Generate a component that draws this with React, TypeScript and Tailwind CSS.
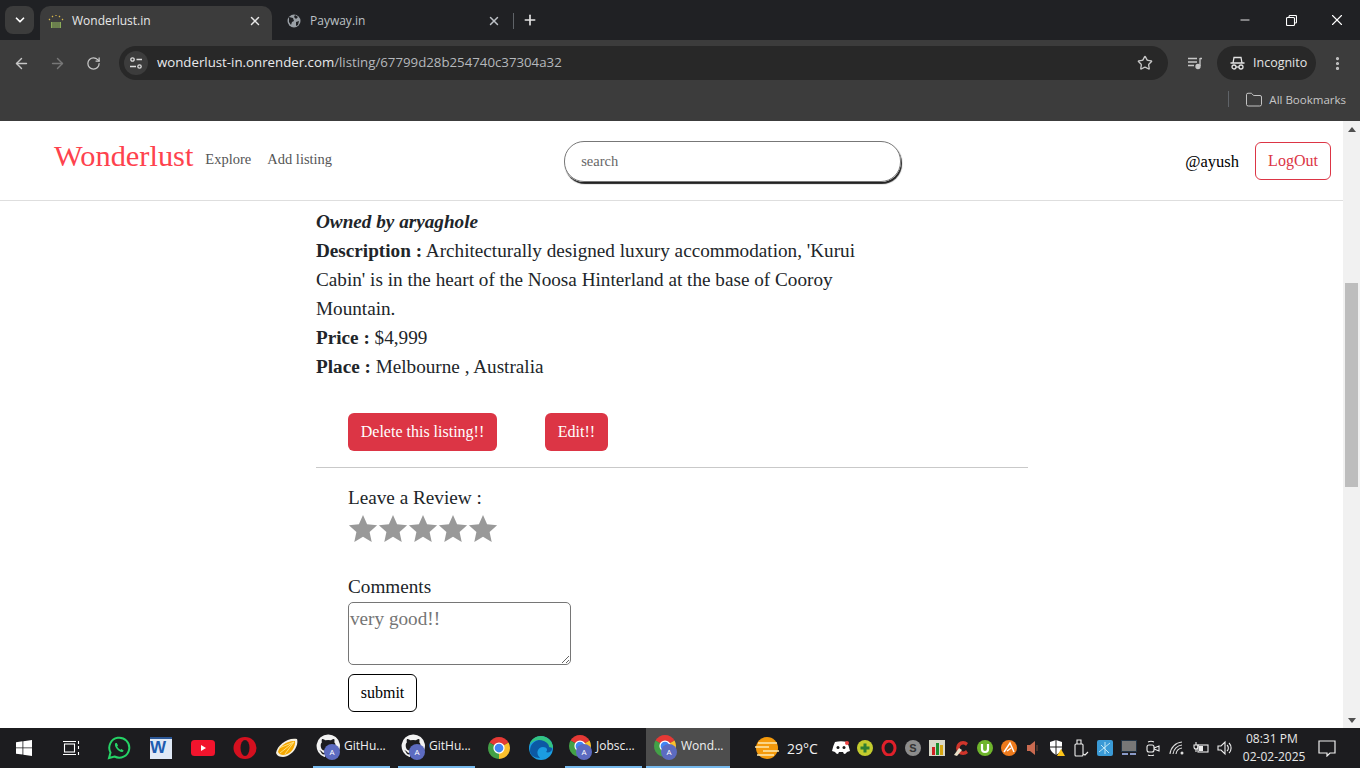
import React from 'react'
import { ArrowLeft, ArrowRight, ChevronDown, Folder, Minus, MoreVertical, Plus, RotateCw, Star, X } from 'lucide-react'

const uiFont = 'font-["Open_Sans","Noto_Sans",sans-serif]'

const ChromeIcon = ({ size = 24 }: { size?: number }) => (
  <svg width={size} height={size} viewBox="0 0 48 48">
    <path d="M24 24L4.950 13A22 22 0 0 1 43.050 13z" fill="#e53935" />
    <path d="M24 24L43.050 13A22 22 0 0 1 24 46z" fill="#fbc02d" />
    <path d="M24 24L24 46A22 22 0 0 1 4.950 13z" fill="#43a047" />
    <circle cx="24" cy="24" r="10" fill="#4285f4" stroke="#fff" strokeWidth="2.500" />
  </svg>
)

const GithubIcon = () => (
  <svg width="24" height="24" viewBox="0 0 24 24" fill="#f2f2f2">
    <path d="M12 .5a11.500 11.500 0 0 0-3.600 22.400c.6.1.8-.3.8-.6v-2c-3.200.7-3.900-1.500-3.900-1.500-.5-1.300-1.300-1.700-1.300-1.700-1-.7.1-.7.1-.7 1.200.1 1.800 1.200 1.800 1.200 1 1.800 2.700 1.300 3.400 1 .1-.8.4-1.300.7-1.600-2.600-.3-5.300-1.300-5.300-5.700 0-1.300.5-2.300 1.200-3.100-.1-.3-.5-1.500.1-3.100 0 0 1-.3 3.200 1.200a11 11 0 0 1 5.800 0c2.200-1.500 3.200-1.200 3.200-1.200.6 1.600.2 2.800.1 3.100.8.8 1.200 1.800 1.200 3.100 0 4.400-2.700 5.400-5.300 5.700.4.400.8 1.100.8 2.200v3.200c0 .3.200.7.800.6A11.500 11.500 0 0 0 12 .5z" />
  </svg>
)

const ProfileBadge = () => (
  <span className="absolute left-[8px] top-[10px] flex h-4 w-4 items-center justify-center rounded-full bg-[#5c6bc0] text-[8px] text-white">A</span>
)

type TaskButtonProps = {
  label: string
  icon: React.ReactNode
  width: string
  inset?: string
  active?: boolean
}

const TaskButton = ({ label, icon, width, inset = 'pl-[3px]', active }: TaskButtonProps) => (
  <div className={`flex h-10 items-center border-b-[2px] border-[#76b9ed] ${inset} ${width} ${active ? 'bg-[#4d4d4d]' : ''}`}>
    <div className="relative mb-[2px] h-6 w-6 shrink-0">
      {icon}
      <ProfileBadge />
    </div>
    <span className="mb-[2px] ml-[4px] text-[12px] text-[#f0f0f0]">{label}</span>
  </div>
)

const TabStrip = () => (
  <div className={`flex h-10 items-end bg-[#202124] pl-[5px] ${uiFont}`}>
    <div className="mb-[6px] flex h-[28px] w-[29px] items-center justify-center rounded-lg bg-[#3c3c3c]">
      <ChevronDown size={14} strokeWidth={3} className="text-white" />
    </div>
    <div className="ml-[6px] flex h-[34px] w-[232px] items-center rounded-t-[10px] bg-[#3c3c3c] pb-[5px] pl-[8px] pr-[10px]">
      <svg width="16" height="16" viewBox="0 0 16 16">
        <rect x="3" y="9" width="10" height="6" fill="#8bac5a" />
        <path d="M5 9v6M7 9v6M9 9v6M11 9v6" stroke="#3c3c3c" strokeWidth="0.800" />
        <path d="M1 6l1 1M4 3l1 1M8 2v1M12 3l-1 1M15 6l-1 1" stroke="#d8b74a" strokeWidth="1.200" />
      </svg>
      <span className="ml-[8px] flex-1 text-[12px] text-[#e8e8e8]">Wonderlust.in</span>
      <X size={14} strokeWidth={2.500} className="text-[#e8e8e8]" />
    </div>
    <div className="flex h-[34px] w-[239px] items-center pb-[5px] pl-[14px] pr-[10px]">
      <svg width="16" height="16" viewBox="0 0 16 16">
        <circle cx="8" cy="8" r="6.500" fill="#9aa0a6" />
        <path d="M3 4l4 1 1 3-2 1-1 3-2-3zM9 2l3 2-2 2-2-2zM10 9l3-1-1 4-2 1z" fill="#202124" />
      </svg>
      <span className="ml-[8px] flex-1 text-[12px] text-[#bdc1c6]">Payway.in</span>
      <X size={14} strokeWidth={2.500} className="text-[#bdc1c6]" />
    </div>
    <div className="mb-[11px] ml-[2px] h-[16px] w-px bg-[#5f6368]" />
    <Plus size={16} strokeWidth={2.500} className="mb-[12px] ml-[8px] text-[#e3e3e3]" />
    <div className="mb-[8px] ml-auto flex h-6 items-center text-white">
      <Minus size={14} strokeWidth={1.500} className="mr-[34px]" />
      <svg width="11" height="11" viewBox="0 0 11 11" fill="none" stroke="#fff" strokeWidth="1.100" className="mr-[31px]">
        <rect x="0.500" y="2.500" width="8" height="8" rx="1" />
        <path d="M3 2.500V1.500a1 1 0 0 1 1-1h5.500a1 1 0 0 1 1 1V7a1 1 0 0 1-1 1h-1" />
      </svg>
      <X size={18} strokeWidth={1.500} className="mr-[14px]" />
    </div>
  </div>
)

const Toolbar = () => (
  <div className={`flex h-[46px] items-center bg-[#3c3c3c] pl-[13px] ${uiFont}`}>
    <ArrowLeft size={17} strokeWidth={2} className="text-[#c7c7c7]" />
    <ArrowRight size={17} strokeWidth={2} className="ml-[19px] text-[#777]" />
    <RotateCw size={15} strokeWidth={2} className="ml-[20px] text-[#c7c7c7]" />
    <div className="ml-[18px] flex h-[34px] w-[1049px] items-center rounded-full bg-[#282828] pl-[5px] pr-[15px]">
      <div className="flex h-6 w-6 items-center justify-center rounded-full bg-[#3c3c3c]">
        <svg width="14" height="14" viewBox="0 0 14 14" fill="none" stroke="#dcdcdc" strokeWidth="1.300">
          <circle cx="3.500" cy="3.500" r="1.700" />
          <path d="M7.500 3.500H13M1 10.500h6" />
          <circle cx="10.500" cy="10.500" r="1.700" />
        </svg>
      </div>
      <span className="ml-[9px] flex-1 text-[13.250px] text-[#b5b8bc]">
        <span className="text-[#e8eaed]">wonderlust-in.onrender.com</span>/listing/67799d28b254740c37304a32
      </span>
      <Star size={16} strokeWidth={2} className="text-[#c7c7c7]" />
    </div>
    <svg width="16" height="14" viewBox="0 0 16 14" fill="none" stroke="#c7c7c7" strokeWidth="1.300" className="ml-[19px]">
      <path d="M1 2.500h9M1 6h9M1 9.500h6M13 2.500H15M13 2v8" />
      <circle cx="11" cy="10.500" r="2" fill="#c7c7c7" />
    </svg>
    <div className="ml-[14px] flex h-[34px] w-[99px] items-center rounded-full bg-[#282828] pl-[13px]">
      <svg width="15" height="14" viewBox="0 0 15 14" fill="none" stroke="#e3e3e3" strokeWidth="1.300">
        <path d="M0.500 7h14M3 7l1-5.500h7L12 7" />
        <circle cx="4" cy="11" r="2" />
        <circle cx="11" cy="11" r="2" />
        <path d="M6 11h3" />
      </svg>
      <span className="ml-[8px] text-[12.500px] text-[#e3e3e3]">Incognito</span>
    </div>
    <MoreVertical size={17} strokeWidth={2.500} className="ml-[13px] text-[#c7c7c7]" />
  </div>
)

const BookmarksBar = () => (
  <div className={`flex h-[35px] items-start justify-end bg-[#3c3c3c] pr-[14px] pt-[5px] ${uiFont}`}>
    <div className="mr-[16px] h-[16px] w-px bg-[#5f6368]" />
    <Folder size={18} strokeWidth={1.300} className="text-[#c7c7c7]" />
    <span className="ml-[6px] text-[11.500px] leading-[18px] text-[#c7c7c7]">All Bookmarks</span>
  </div>
)

const SiteHeader = () => (
  <div className="flex h-[80px] items-center border-b border-[#dedede] pl-[54px] pr-[12px]">
    <span className="mb-[7px] text-[30.400px] text-[#fe424d]">Wonderlust</span>
    <span className="mb-[2px] ml-[12px] text-[14.500px] text-[#555]">Explore</span>
    <span className="mb-[2px] ml-[16px] text-[14.500px] text-[#555]">Add listing</span>
    <div className="ml-[232px] mt-[2px] flex h-[41px] w-[337px] items-center rounded-[20px] border border-[#777] pl-[16px] text-[14.500px] text-[#666] shadow-[1px_2px_1px_#222]">search</div>
    <span className="ml-auto mt-[4px] text-[16.500px] text-black">@ayush</span>
    <button className="ml-[16px] h-[38px] w-[76px] rounded-md border border-[#dc3545] text-[16px] text-[#dc3545]">LogOut</button>
  </div>
)

const ListingDetails = () => (
  <div className="pl-[316px]">
    <div className="w-[570px] pt-[6px] text-[19.200px] leading-[29px] text-[#212529]">
      <p className="font-bold italic">Owned by aryaghole</p>
      <p><b>Description :</b> Architecturally designed luxury accommodation, 'Kurui Cabin' is in the heart of the Noosa Hinterland at the base of Cooroy Mountain.</p>
      <p><b>Price :</b> $4,999</p>
      <p><b>Place :</b> Melbourne , Australia</p>
    </div>
    <div className="mt-[32px] flex pl-[32px]">
      <button className="h-[38px] w-[149px] rounded-md bg-[#dc3545] text-[16px] text-white">Delete this listing!!</button>
      <button className="ml-[48px] h-[38px] w-[63px] rounded-md bg-[#dc3545] text-[16px] text-white">Edit!!</button>
    </div>
    <div className="mt-[16px] w-[712px] border-t border-[#c9c9c9]" />
  </div>
)

const starPath = 'M15 1l4.100 9.300 10 1-7.500 6.700 2.100 9.900L15 22.800 6.300 28l2.100-9.900L.9 11.300l10-1z'

const ReviewForm = () => (
  <div className="pl-[348px] text-[#212529]">
    <p className="mt-[18px] text-[19.200px] leading-[24px]">Leave a Review :</p>
    <div className="mt-[4px] flex">
      {[0, 1, 2, 3, 4].map(i => (
        <svg key={i} width="30" height="30" viewBox="0 0 30 30" fill="#999">
          <path d={starPath} />
        </svg>
      ))}
    </div>
    <p className="mt-[31px] text-[19.200px] leading-[24px]">Comments</p>
    <textarea
      readOnly
      placeholder="very good!!"
      className="mt-[3px] block h-[63px] w-[223px] rounded-[5px] border border-[#767676] px-[1px] py-[4px] text-[19.200px] leading-[24px] outline-none placeholder:text-[#757575]"
    />
    <button className="mt-[9px] h-[38px] w-[69px] rounded-md border border-black text-[16px] text-black">submit</button>
  </div>
)

const PageScrollbar = () => (
  <div className="flex w-[17px] shrink-0 flex-col items-center bg-[#f1f1f1]">
    <div className="mt-[6px] h-0 w-0 border-x-[4px] border-b-[5px] border-x-transparent border-b-[#505050]" />
    <div className="mt-[151px] h-[204px] w-[13px] bg-[#bdbdbd]" />
    <div className="mb-[5px] mt-auto h-0 w-0 border-x-[4px] border-t-[5px] border-x-transparent border-t-[#505050]" />
  </div>
)

const trayIcons: React.ReactNode[] = [
  <svg width="18" height="14" viewBox="0 0 18 14" fill="#fff"><path d="M3 1q6-1.500 12 0 2 4 3 9l-3 1q-1 2-3 2l-1-2H7l-1 2q-2 0-3-2l-3-1q1-5 3-9z" /><circle cx="6" cy="6.500" r="1.500" fill="#1c1c1c" /><circle cx="12" cy="6.500" r="1.500" fill="#1c1c1c" /><circle cx="15" cy="2" r="2" fill="#f04747" /></svg>,
  <svg width="16" height="16" viewBox="0 0 16 16"><circle cx="8" cy="8" r="8" fill="#c4cc2e" /><path d="M6.500 3.500h3v3h3v3h-3v3h-3v-3h-3v-3h3z" fill="#2f7d32" /></svg>,
  <svg width="16" height="16" viewBox="0 0 16 16"><ellipse cx="8" cy="8" rx="6" ry="7" fill="none" stroke="#e0202a" strokeWidth="3" /></svg>,
  <svg width="16" height="16" viewBox="0 0 16 16"><circle cx="8" cy="8" r="8" fill="#8c8c8c" /><text x="8" y="12" textAnchor="middle" fontSize="11" fontWeight="bold" fill="#333" fontFamily="Liberation Sans">S</text></svg>,
  <svg width="16" height="16" viewBox="0 0 16 16"><rect width="16" height="16" fill="#d8d8c8" /><rect x="3" y="7" width="3" height="8" fill="#c22" /><rect x="7" y="3" width="3" height="12" fill="#1a8f2e" /><rect x="11" y="5" width="3" height="10" fill="#d6a511" /></svg>,
  <svg width="16" height="16" viewBox="0 0 16 16"><path d="M15 3A7 7 0 1 0 15 13l-2-3a3.500 3.500 0 1 1 0-4z" fill="#d0352b" /><path d="M1 15l5-7 3 2-5 6z" fill="#e8e0c8" /></svg>,
  <svg width="16" height="16" viewBox="0 0 16 16"><circle cx="8" cy="8" r="8" fill="#6fb52c" /><path d="M5 4v5a3 3 0 0 0 6 0V4" fill="none" stroke="#fff" strokeWidth="2.200" /></svg>,
  <svg width="16" height="16" viewBox="0 0 16 16"><circle cx="8" cy="8" r="8" fill="#ee7a1c" /><path d="M3 12L9 3l4 9M6 11l4-3" fill="none" stroke="#fff" strokeWidth="1.500" /></svg>,
  <svg width="14" height="16" viewBox="0 0 14 16"><path d="M1 5h3l5-4v14l-5-4H1z" fill="#c96a50" /><path d="M11 5v6" stroke="#5a3a30" strokeWidth="1.500" /></svg>,
  <svg width="18" height="18" viewBox="0 0 18 18"><path d="M8 1l6 2v5c0 4-3 6-6 8-3-2-6-4-6-8V3z" fill="#fff" /><path d="M8 1v15M2 8h12" stroke="#1c1c1c" strokeWidth="1" /><path d="M13 10l4 7H9z" fill="#fcc419" /></svg>,
  <svg width="16" height="18" viewBox="0 0 16 18" fill="none" stroke="#eee" strokeWidth="1.100"><rect x="2" y="5" width="8" height="12" rx="1" /><path d="M4 5V1h4v4M10 15l2 1 3-3" /></svg>,
  <svg width="16" height="16" viewBox="0 0 16 16"><rect width="16" height="16" rx="2" fill="#3a9ad6" /><path d="M2 12L13 3M4 5l8 8M8 2v12" stroke="#bfe6f5" strokeWidth="1" /></svg>,
  <svg width="16" height="16" viewBox="0 0 16 16"><rect x="0.500" y="0.500" width="15" height="11" fill="#777" stroke="#234" /><path d="M1 14h6M9 14h6" stroke="#8a9ac8" strokeWidth="2" /></svg>,
  <svg width="16" height="16" viewBox="0 0 16 16" fill="none" stroke="#eee" strokeWidth="1.100"><rect x="2" y="5" width="7" height="7" rx="2" /><path d="M9 8l5-2v5l-5-2M3 2q3-1.500 6 0M3 15q3 1.500 6 0" /></svg>,
  <svg width="16" height="16" viewBox="0 0 16 16" fill="none" stroke="#ddd" strokeWidth="1.100"><path d="M1 14A13 13 0 0 1 13 2M4 14a10 10 0 0 1 9-9M7 14a7 7 0 0 1 6-6" /><circle cx="13" cy="13" r="1.500" fill="#ddd" stroke="none" /></svg>,
  <svg width="16" height="16" viewBox="0 0 16 16" fill="none" stroke="#eee" strokeWidth="1.100"><rect x="5" y="5" width="10" height="7" /><path d="M3 2v3M1 5h4v2a2 2 0 0 1-4 0zM3 9v3" /><rect x="6" y="6" width="4" height="5" fill="#eee" stroke="none" /></svg>,
  <svg width="16" height="16" viewBox="0 0 16 16" fill="none" stroke="#eee" strokeWidth="1.100"><path d="M1 6h3l4-4v12l-4-4H1zM10 5a4 4 0 0 1 0 6M12 3a7 7 0 0 1 0 10" /></svg>,
]

const Taskbar = () => (
  <div className={`flex h-10 items-center bg-[#1c1c1f] ${uiFont}`}>
    <div className="flex w-[48px] justify-center">
      <svg width="16" height="16" viewBox="0 0 16 16" fill="#fff"><path d="M0 2.200L6.500 1.300v6.200H0zM7.300 1.200L16 0v7.500H7.300zM0 8.300h6.500v6.300L0 13.700zM7.300 8.300H16V16l-8.700-1.200z" /></svg>
    </div>
    <div className="flex w-[47px] justify-center">
      <svg width="17" height="15" viewBox="0 0 17 15" fill="none" stroke="#fff" strokeWidth="1.100"><rect x="1.500" y="3" width="10" height="8" /><path d="M0 .5h13M0 13.500h13M15.500 0v3M15.500 5v3M15.500 11v3" /></svg>
    </div>
    <div className="flex w-[45px] pl-[12px]">
      <svg width="24" height="24" viewBox="0 0 24 24" fill="none"><path d="M2 22l1.500-5.500A10 10 0 1 1 7.500 20.500z" stroke="#25d366" strokeWidth="2" fill="#1c1c1f" /><path d="M8.500 7c-1 1-.8 3 1 5.500s4.500 4 6 3.500l1.300-1.300-2.300-1.700-1 .8c-1-.3-2.800-2-3.300-3.300l.8-1L9.800 7z" fill="#25d366" /></svg>
    </div>
    <div className="flex w-[42px] justify-center">
      <svg width="22" height="22" viewBox="0 0 22 22"><rect width="22" height="22" fill="#dfe8f5" /><rect x="0" y="0" width="22" height="2" fill="#2b5797" /><text x="0" y="16" fontSize="17" fontWeight="bold" fill="#1d5bb0" fontFamily="Liberation Sans">W</text></svg>
    </div>
    <div className="flex w-[42px] justify-center">
      <svg width="24" height="16" viewBox="0 0 24 16"><rect width="24" height="16" rx="3.500" fill="#f2142d" /><path d="M10 5l5 3-5 3z" fill="#fff" /></svg>
    </div>
    <div className="flex w-[42px] justify-center">
      <svg width="24" height="24" viewBox="0 0 24 24"><ellipse cx="12" cy="12" rx="11.500" ry="11" fill="#d4101f" /><ellipse cx="12" cy="12" rx="4.500" ry="8" fill="#1c1c1f" /></svg>
    </div>
    <div className="flex w-[42px] justify-center">
      <svg width="24" height="24" viewBox="0 0 24 24"><path d="M1 17C2 9 13 1 22 3c2 6-4 17-14 18-3 0-6-1-7-4z" fill="#f4efe0" /><path d="M3 16C4 10 13 4 20 5c1 5-4 14-12 14-2 0-4-1-5-3z" fill="#f6a800" /><path d="M5 17L19 6M10 18L19 6M4 12L19 6" stroke="#ffe07a" strokeWidth="1" /></svg>
    </div>
    <div className="ml-[5px]"><TaskButton label="GitHu..." icon={<GithubIcon />} width="w-[77px]" /></div>
    <div className="ml-[8px]"><TaskButton label="GitHu..." icon={<GithubIcon />} width="w-[77px]" /></div>
    <div className="ml-[3px] flex w-[42px] justify-center"><ChromeIcon /></div>
    <div className="flex w-[42px] justify-center">
      <svg width="24" height="24" viewBox="0 0 24 24"><circle cx="12" cy="12" r="12" fill="#1b9de2" /><path d="M1 15C1 7 8 3 13 4c6 1 10 5 10 9 0 3-4 4-6 3 2-2 1-5-3-5-5 0-8 6-3 11C5 22 1 19 1 15z" fill="#0c59a4" /><path d="M24 12c0-7-6-12-12-12C7 0 2 3 .5 9 4 4 10 3 15 5c4 2 5 4 5 6z" fill="#33c481" /></svg>
    </div>
    <div className="ml-[3px]"><TaskButton label="Jobsc..." icon={<ChromeIcon />} width="w-[77px]" /></div>
    <div className="ml-[4px]"><TaskButton label="Wond..." icon={<ChromeIcon />} width="w-[84px]" inset="pl-[7px]" active /></div>
    <div className="ml-[25px] flex items-center">
      <svg width="24" height="22" viewBox="0 0 24 22"><circle cx="12" cy="11" r="11" fill="#f59a0c" /><path d="M3 6h19M0 10h14M8 14h16M2 18h17" stroke="#fde9b0" strokeWidth="1.500" /></svg>
      <span className="ml-[8px] text-[14px] text-[#f0f0f0]">29°C</span>
    </div>
    <div className="ml-[11px] flex">
      {trayIcons.map((icon, i) => (
        <div key={i} className="flex h-6 w-6 items-center justify-center">{icon}</div>
      ))}
    </div>
    <div className="ml-[6px] w-[58px] text-center text-[12px] leading-[18px] text-[#e8e8e8]">
      <p>08:31 PM</p>
      <p className="whitespace-nowrap">02-02-2025</p>
    </div>
    <div className="ml-[17px]">
      <svg width="18" height="18" viewBox="0 0 18 18" fill="none" stroke="#eee" strokeWidth="1.200"><path d="M1 2h16v12h-5l-3 3v-3H1z" /></svg>
    </div>
  </div>
)

const App = () => (
  <div className='flex h-screen w-full flex-col overflow-hidden bg-white font-["Liberation_Serif","Times_New_Roman",serif]'>
    <TabStrip />
    <Toolbar />
    <BookmarksBar />
    <div className="flex min-h-0 flex-1">
      <div className="min-w-0 flex-1 overflow-hidden">
        <SiteHeader />
        <ListingDetails />
        <ReviewForm />
      </div>
      <PageScrollbar />
    </div>
    <Taskbar />
  </div>
)

export default App
